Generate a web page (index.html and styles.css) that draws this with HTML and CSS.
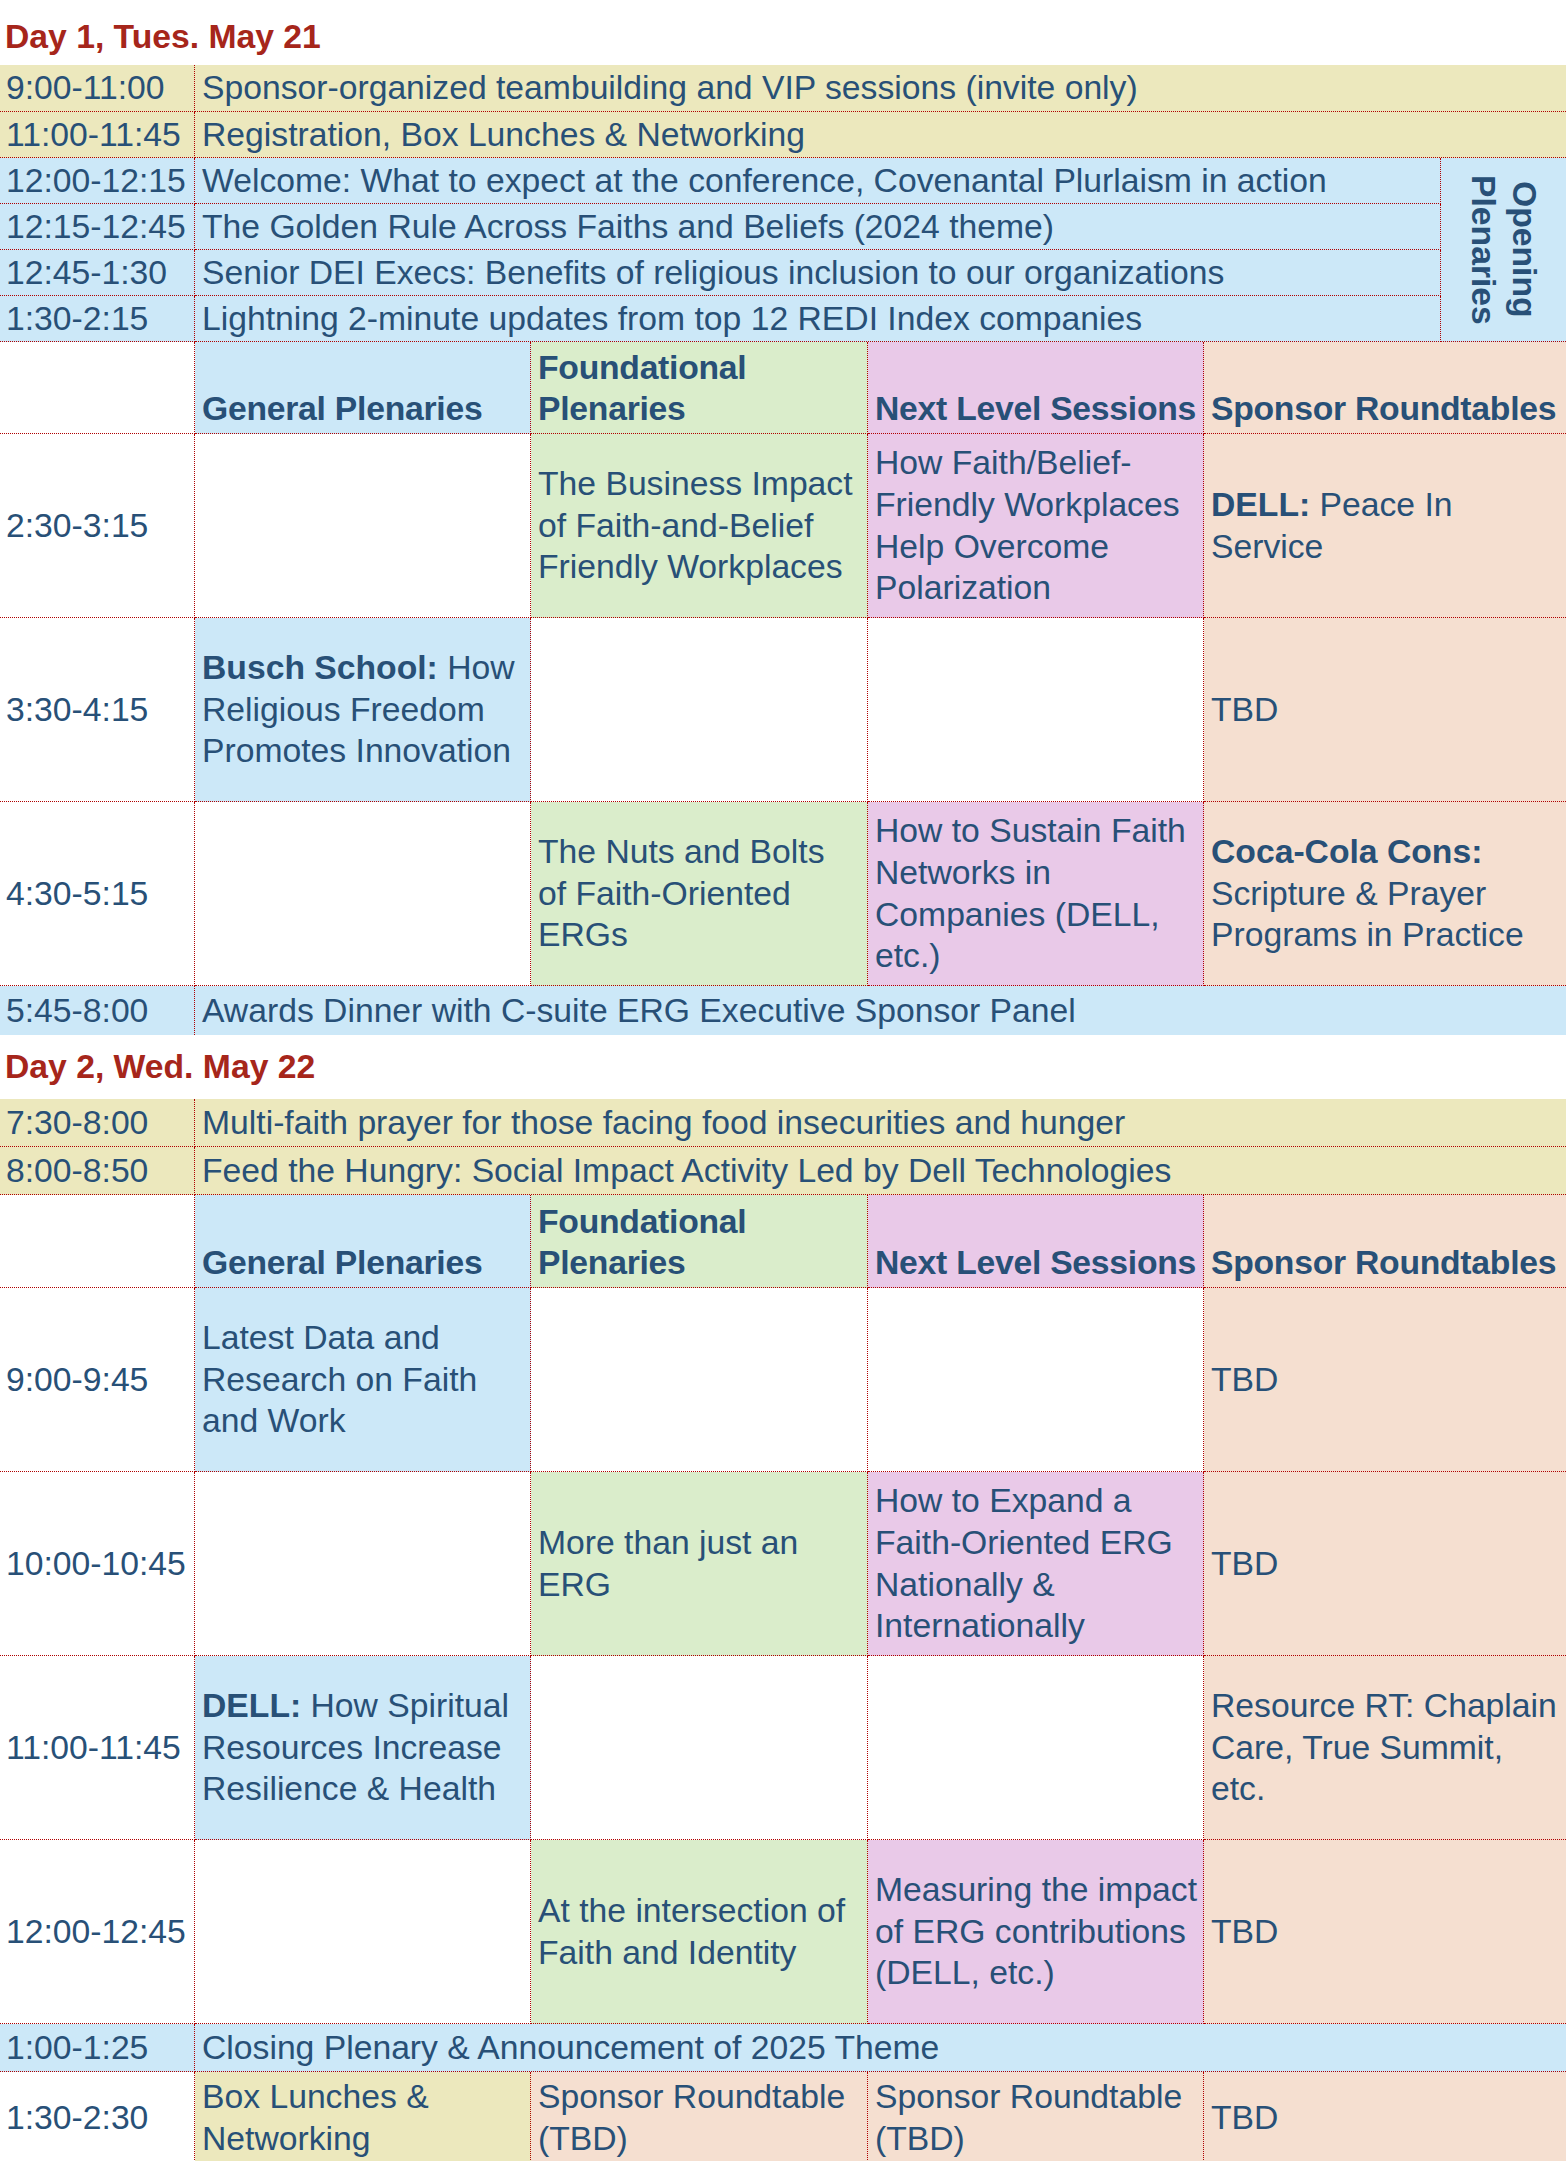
FILE: index.html
```html
<!DOCTYPE html>
<html lang="en">
<head>
<meta charset="utf-8">
<title>Conference Schedule</title>
<link rel="stylesheet" href="styles.css">
</head>
<body>
<main class="schedule">
  <h2 class="day day1">Day 1, Tues. May 21</h2>

  <section class="grid open-grid">
    <div class="c t y"><span>9:00-11:00</span></div>
    <div class="c y full end"><span>Sponsor-organized teambuilding and VIP sessions (invite only)</span></div>
    <div class="c t y"><span>11:00-11:45</span></div>
    <div class="c y full end"><span>Registration, Box Lunches &amp; Networking</span></div>
    <div class="c opening b end"><span>Opening<br>Plenaries</span></div>
    <div class="c t b"><span>12:00-12:15</span></div>
    <div class="c b"><span>Welcome: What to expect at the conference, Covenantal Plurlaism in action</span></div>
    <div class="c t b"><span>12:15-12:45</span></div>
    <div class="c b"><span>The Golden Rule Across Faiths and Beliefs (2024 theme)</span></div>
    <div class="c t b"><span>12:45-1:30</span></div>
    <div class="c b"><span>Senior DEI Execs: Benefits of religious inclusion to our organizations</span></div>
    <div class="c t b"><span>1:30-2:15</span></div>
    <div class="c b"><span>Lightning 2-minute updates from top 12 REDI Index companies</span></div>
  </section>

  <section class="grid tracks day1-tracks">
    <div class="c t hdr"></div>
    <div class="c hdr b"><span>General Plenaries</span></div>
    <div class="c hdr g"><span>Foundational<br>Plenaries</span></div>
    <div class="c hdr p"><span>Next Level Sessions</span></div>
    <div class="c hdr o end"><span>Sponsor Roundtables</span></div>

    <div class="c t"><span>2:30-3:15</span></div>
    <div class="c"></div>
    <div class="c g"><span>The Business Impact<br>of Faith-and-Belief<br>Friendly Workplaces</span></div>
    <div class="c p"><span>How Faith/Belief-<br>Friendly Workplaces<br>Help Overcome<br>Polarization</span></div>
    <div class="c o end"><span><b>DELL:</b> Peace In<br>Service</span></div>

    <div class="c t"><span>3:30-4:15</span></div>
    <div class="c b"><span><b>Busch School:</b> How<br>Religious Freedom<br>Promotes Innovation</span></div>
    <div class="c"></div>
    <div class="c"></div>
    <div class="c o end"><span>TBD</span></div>

    <div class="c t"><span>4:30-5:15</span></div>
    <div class="c"></div>
    <div class="c g"><span>The Nuts and Bolts<br>of Faith-Oriented<br>ERGs</span></div>
    <div class="c p"><span>How to Sustain Faith<br>Networks in<br>Companies (DELL,<br>etc.)</span></div>
    <div class="c o end"><span><b>Coca-Cola Cons:</b><br>Scripture &amp; Prayer<br>Programs in Practice</span></div>

    <div class="c t b nob"><span>5:45-8:00</span></div>
    <div class="c b full end nob"><span>Awards Dinner with C-suite ERG Executive Sponsor Panel</span></div>
  </section>

  <h2 class="day day2">Day 2, Wed. May 22</h2>

  <section class="grid tracks day2-grid">
    <div class="c t y"><span>7:30-8:00</span></div>
    <div class="c y full end"><span>Multi-faith prayer for those facing food insecurities and hunger</span></div>
    <div class="c t y"><span>8:00-8:50</span></div>
    <div class="c y full end"><span>Feed the Hungry: Social Impact Activity Led by Dell Technologies</span></div>

    <div class="c t hdr"></div>
    <div class="c hdr b"><span>General Plenaries</span></div>
    <div class="c hdr g"><span>Foundational<br>Plenaries</span></div>
    <div class="c hdr p"><span>Next Level Sessions</span></div>
    <div class="c hdr o end"><span>Sponsor Roundtables</span></div>

    <div class="c t"><span>9:00-9:45</span></div>
    <div class="c b"><span>Latest Data and<br>Research on Faith<br>and Work</span></div>
    <div class="c"></div>
    <div class="c"></div>
    <div class="c o end"><span>TBD</span></div>

    <div class="c t"><span>10:00-10:45</span></div>
    <div class="c"></div>
    <div class="c g"><span>More than just an<br>ERG</span></div>
    <div class="c p"><span>How to Expand a<br>Faith-Oriented ERG<br>Nationally &amp;<br>Internationally</span></div>
    <div class="c o end"><span>TBD</span></div>

    <div class="c t"><span>11:00-11:45</span></div>
    <div class="c b"><span><b>DELL:</b> How Spiritual<br>Resources Increase<br>Resilience &amp; Health</span></div>
    <div class="c"></div>
    <div class="c"></div>
    <div class="c o end"><span>Resource RT: Chaplain<br>Care, True Summit,<br>etc.</span></div>

    <div class="c t"><span>12:00-12:45</span></div>
    <div class="c"></div>
    <div class="c g"><span>At the intersection of<br>Faith and Identity</span></div>
    <div class="c p"><span>Measuring the impact<br>of ERG contributions<br>(DELL, etc.)</span></div>
    <div class="c o end"><span>TBD</span></div>

    <div class="c t b"><span>1:00-1:25</span></div>
    <div class="c b full end"><span>Closing Plenary &amp; Announcement of 2025 Theme</span></div>

    <div class="c t nob"><span>1:30-2:30</span></div>
    <div class="c y nob"><span>Box Lunches &amp;<br>Networking</span></div>
    <div class="c o nob"><span>Sponsor Roundtable<br>(TBD)</span></div>
    <div class="c o nob"><span>Sponsor Roundtable<br>(TBD)</span></div>
    <div class="c o end nob"><span>TBD</span></div>
  </section>
</main>
</body>
</html>
```

FILE: styles.css
```css
:root {
  --ink: #285077;
  --line: #b00000;
  --yellow: #ece8bd;
  --blue: #cce8f8;
  --green: #daedcb;
  --purple: #e9c9e8;
  --peach: #f5dfd0;
  --red: #a6261b;
}

* {
  box-sizing: border-box;
}

html,
body {
  margin: 0;
  padding: 0;
  background: #ffffff;
}

body {
  width: 1566px;
  font-family: "Liberation Sans", Arial, Helvetica, sans-serif;
  font-size: 33.7px;
  line-height: 41.7px;
  color: var(--ink);
}

.day {
  margin: 0;
  font-size: inherit;
  line-height: inherit;
  font-weight: 700;
  color: var(--red);
  padding-left: 5px;
}

.day1 {
  height: 65px;
  padding-top: 16px;
}

.day2 {
  height: 64px;
  padding-top: 11px;
}

.grid {
  display: grid;
}

.open-grid {
  grid-template-columns: 195px 1fr 125px;
  grid-template-rows: 47px repeat(5, 46px);
}

.tracks {
  grid-template-columns: 195px 336px 337px 336px 1fr;
}

.day1-tracks {
  grid-template-rows: 92px repeat(3, 184px) 49px;
}

.day2-grid {
  grid-template-rows: 48px 48px 93px repeat(4, 184px) 48px 92px;
}

.c {
  display: flex;
  align-items: center;
  min-width: 0;
  padding: 0 0 0 7px;
  white-space: nowrap;
  border-right: 1px dotted var(--line);
  border-bottom: 1px dotted var(--line);
}

.c.t {
  padding-left: 6px;
}

.c.end {
  border-right: 0;
}

.c.nob {
  border-bottom: 0;
}

.full {
  grid-column: 2 / -1;
}

.hdr {
  align-items: flex-end;
  font-weight: 700;
  letter-spacing: -0.25px;
  padding-bottom: 3px;
}

.opening {
  grid-column: 3;
  grid-row: 3 / span 4;
  writing-mode: vertical-rl;
  justify-content: center;
  align-items: center;
  padding: 0;
  font-weight: 700;
  text-align: center;
}

.y { background: var(--yellow); }
.b { background: var(--blue); }
.g { background: var(--green); }
.p { background: var(--purple); }
.o { background: var(--peach); }

b {
  font-weight: 700;
}
```
